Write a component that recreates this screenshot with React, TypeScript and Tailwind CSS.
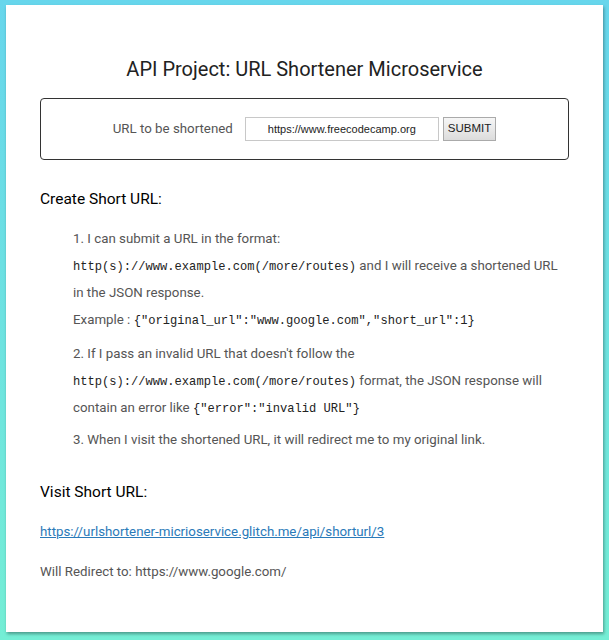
export default function App() {
  const mono = "font-['Liberation_Mono',monospace] text-[12.1px] text-[#222]";
  return (
    <div className="h-[640px] w-[609px] bg-gradient-to-b from-[#67d6ec] to-[#74eed5] pt-[5px] pl-[6px] pr-[6px] font-['Roboto',sans-serif]">
      <div className="h-[627px] w-[597px] bg-white shadow-[1px_2px_3px_rgba(0,0,0,0.35)] px-[34px]">
        <h1 className="pt-[50px] text-center text-[20px] leading-[28px] text-[#222]">
          API Project: URL Shortener Microservice
        </h1>
        <div className="mt-[15px] flex h-[62px] items-center justify-center gap-[12px] rounded-[4px] border border-[#333]">
          <span className="text-[13.3px] text-[#555]">URL to be shortened</span>
          <div className="flex items-center gap-[4px]">
            <input
              readOnly
              value="https://www.freecodecamp.org"
              className="h-[24px] w-[194px] border border-[#c8c8c8] text-center font-['Liberation_Sans',sans-serif] text-[11px] text-[#222] outline-none"
            />
            <button className="h-[24px] border border-[#aaa] bg-gradient-to-b from-[#f6f6f6] to-[#dcdcdc] px-[4px] font-['Liberation_Sans',sans-serif] text-[11.5px] text-[#222]">
              SUBMIT
            </button>
          </div>
        </div>
        <h3 className="mt-[28px] text-[15.5px] leading-[22px] text-black">Create Short URL:</h3>
        <div className="mt-[16px] pl-[33px] text-[13.3px] leading-[26.5px] text-[#555]">
          <p>1. I can submit a URL in the format:</p>
          <p>
            <code className={mono}>http(s)://www.example.com(/more/routes)</code> and I will receive a shortened URL
            in the JSON response.
          </p>
          <p>
            Example : <code className={mono}>{'{"original_url":"www.google.com","short_url":1}'}</code>
          </p>
          <p className="mt-[7px]">
            2. If I pass an invalid URL that doesn't follow the{" "}
            <code className={mono}>http(s)://www.example.com(/more/routes)</code> format, the JSON response will
            contain an error like <code className={mono}>{'{"error":"invalid URL"}'}</code>
          </p>
          <p className="mt-[4px]">3. When I visit the shortened URL, it will redirect me to my original link.</p>
        </div>
        <h3 className="mt-[28px] text-[15.5px] leading-[22px] text-black">Visit Short URL:</h3>
        <p className="mt-[18px] text-[13.3px] leading-[22px]">
          <a href="#" className="text-[#2a7ab9] underline">
            https://urlshortener-micrioservice.glitch.me/api/shorturl/3
          </a>
        </p>
        <p className="mt-[18px] text-[13.3px] leading-[22px] text-[#555]">Will Redirect to: https://www.google.com/</p>
      </div>
    </div>
  );
}
